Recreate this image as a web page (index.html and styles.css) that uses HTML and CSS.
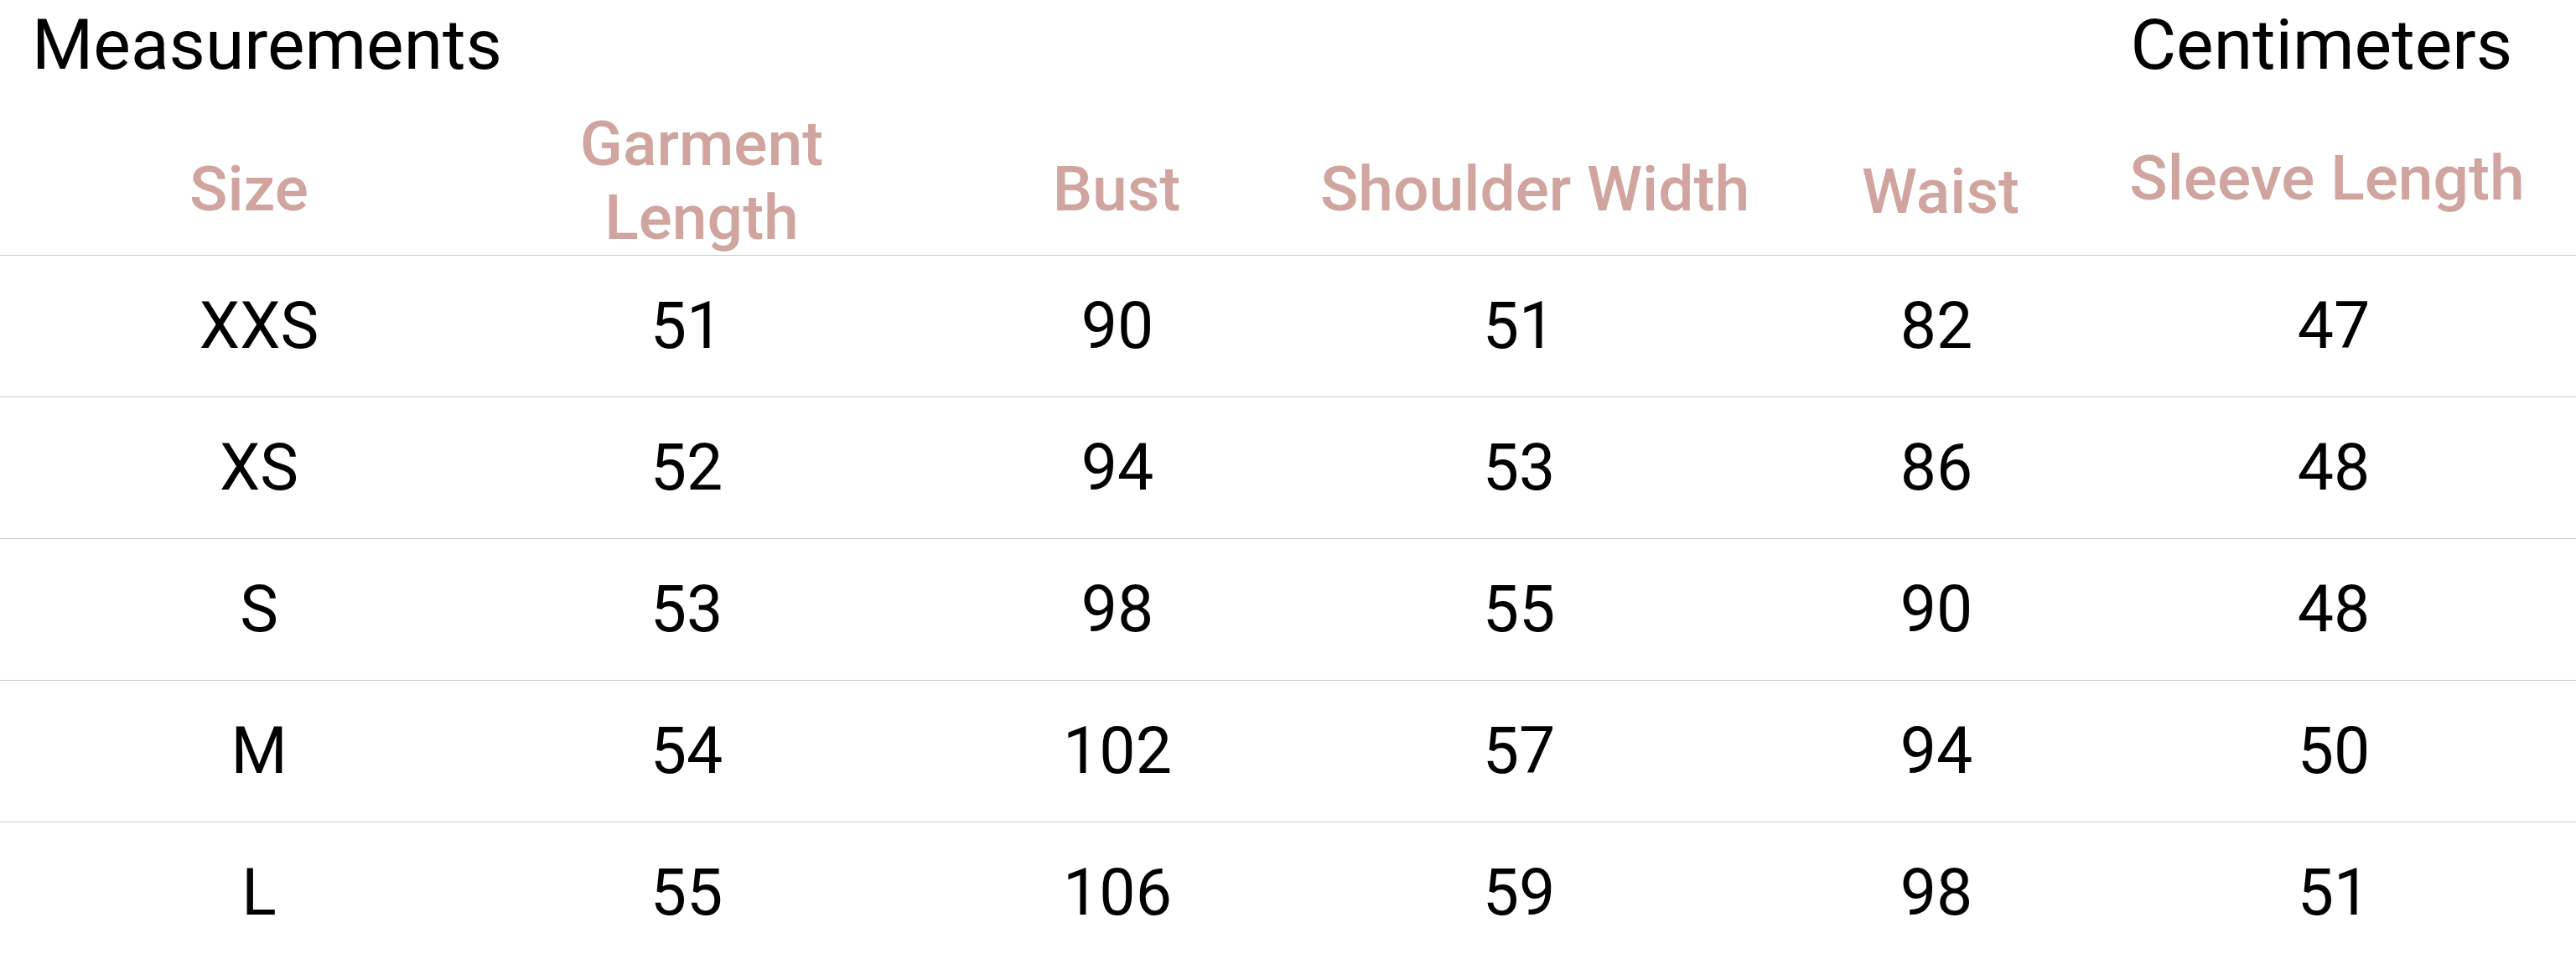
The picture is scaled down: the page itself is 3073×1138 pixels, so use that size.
FILE: index.html
```html
<!DOCTYPE html>
<html lang="en">
<head>
<meta charset="utf-8">
<title>Measurements</title>
<link rel="stylesheet" href="styles.css">
</head>
<body>
<div class="page">
  <div class="topbar">
    <div class="title">Measurements</div>
    <div class="unit">Centimeters</div>
  </div>
  <div class="table">
    <div class="row head">
      <div class="cell h-size">Size</div>
      <div class="cell h-garment">Garment<br>Length</div>
      <div class="cell h-bust">Bust</div>
      <div class="cell h-shoulder">Shoulder Width</div>
      <div class="cell h-waist">Waist</div>
      <div class="cell h-sleeve">Sleeve Length</div>
    </div>
    <div class="row body">
      <div class="cell">XXS</div><div class="cell">51</div><div class="cell">90</div><div class="cell">51</div><div class="cell">82</div><div class="cell">47</div>
    </div>
    <div class="row body">
      <div class="cell">XS</div><div class="cell">52</div><div class="cell">94</div><div class="cell">53</div><div class="cell">86</div><div class="cell">48</div>
    </div>
    <div class="row body">
      <div class="cell">S</div><div class="cell">53</div><div class="cell">98</div><div class="cell">55</div><div class="cell">90</div><div class="cell">48</div>
    </div>
    <div class="row body">
      <div class="cell">M</div><div class="cell">54</div><div class="cell">102</div><div class="cell">57</div><div class="cell">94</div><div class="cell">50</div>
    </div>
    <div class="row body">
      <div class="cell">L</div><div class="cell">55</div><div class="cell">106</div><div class="cell">59</div><div class="cell">98</div><div class="cell">51</div>
    </div>
  </div>
</div>
</body>
</html>
```

FILE: styles.css
```css
html, body {
  margin: 0;
  padding: 0;
  background: #ffffff;
  overflow: hidden;
}
body {
  font-family: Roboto, "Liberation Sans", sans-serif;
  color: #000000;
}
.page {
  width: 3073px;
  height: 1138px;
  overflow: hidden;
}
.topbar {
  display: flex;
  justify-content: space-between;
  align-items: flex-start;
  padding: 6px 76px 0 38px;
  font-size: 84px;
  line-height: 96px;
  height: 97px;
}
.table {
  display: flex;
  flex-direction: column;
}
.row {
  display: grid;
  grid-template-columns: 618px 402px 626px 332px 664px 284px;
}
.row.head {
  height: 177px;
  padding-top: 24px;
  align-items: center;
  color: #d0a49f;
  font-weight: 500;
  font-size: 75px;
  line-height: 88px;
}
.row.body {
  height: 168px;
  border-top: 1px solid #cbcbcb;
  align-items: center;
  font-size: 77px;
  line-height: 92px;
}
.cell {
  display: flex;
  justify-content: center;
  align-items: center;
  text-align: center;
  white-space: nowrap;
  min-width: 0;
}
.h-size { padding-right: 24px; }
.h-garment { padding-left: 36px; margin-bottom: 20px; }
.h-bust { padding-right: 2px; }
.h-shoulder { padding-left: 38px; }
.h-waist { padding-left: 10px; margin-top: 6px; }
.h-sleeve { padding-right: 16px; margin-bottom: 26px; }
```
